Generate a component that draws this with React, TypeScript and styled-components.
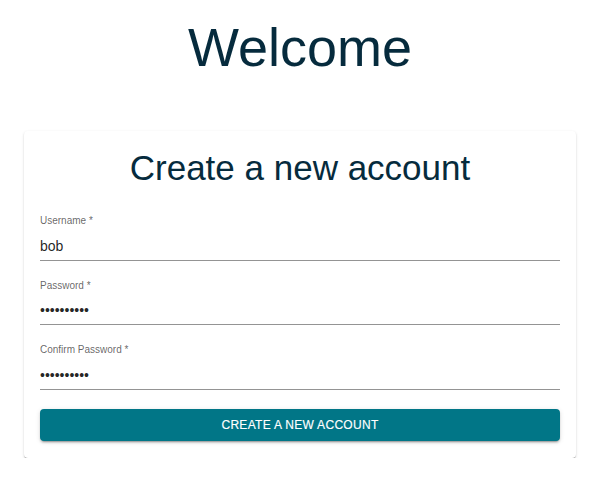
import React from 'react';
import styled, { createGlobalStyle } from 'styled-components';

const GlobalStyle = createGlobalStyle`
	body {
		margin: 0;
		background: #ffffff;
		font-family: "Liberation Sans", Arial, sans-serif;
	}
`

const Page = styled.main`
	display: flex;
	flex-direction: column;
	align-items: stretch;
	padding: 20px 20px 0 24px;
`
const Heading = styled.h1`
	margin: 0 0 57px;
	text-align: center;
	font-size: 54px;
	font-weight: 400;
	line-height: 54px;
	color: #062b3d;
`
const Card = styled.form`
	display: flex;
	flex-direction: column;
	gap: 19px;
	padding: 16px 16px 17px;
	border-radius: 4px;
	background: #fff;
	box-shadow: 0 2px 1px -1px rgba(0, 0, 0, 0.28), 0 1px 1px 0 rgba(0, 0, 0, 0.16), 0 1px 3px 0 rgba(0, 0, 0, 0.12);
`
const CardTitle = styled.h2`
	margin: 0 0 7px;
	text-align: center;
	font-size: 35px;
	font-weight: 400;
	line-height: 42px;
	color: #062b3d;
`
const Field = styled.label`
	display: flex;
	flex-direction: column;
`
const Label = styled.span`
	font-size: 10px;
	line-height: 12px;
	margin-bottom: 8.5px;
	color: rgba(0, 0, 0, 0.62);
`
const Input = styled.input`
	box-sizing: content-box;
	height: 20px;
	padding: 0 0 4px;
	margin: 0;
	border: 0;
	border-bottom: 1px solid rgba(0, 0, 0, 0.42);
	outline: none;
	background: transparent;
	font-family: inherit;
	font-size: 14px;
	line-height: 20px;
	color: rgba(0, 0, 0, 0.87);
`
const SubmitButton = styled.button`
	height: 32px;
	border: 0;
	border-radius: 4px;
	background: #017687;
	color: #fff;
	font-family: inherit;
	font-size: 12px;
	font-weight: 500;
	letter-spacing: 0.3px;
	text-transform: uppercase;
	-webkit-text-stroke: 0.15px #fff;
	cursor: pointer;
	box-shadow: 0 3px 1px -2px rgba(0, 0, 0, 0.2), 0 2px 2px 0 rgba(0, 0, 0, 0.14), 0 1px 5px 0 rgba(0, 0, 0, 0.12);
`

interface IFieldProps {
	label: string;
	type?: string;
	value: string;
}

function TextField(props: IFieldProps) {
	return (
		<Field>
			<Label>{props.label} *</Label>
			<Input type={props.type || 'text'} defaultValue={props.value} readOnly/>
		</Field>
	);
}

export default function App() {
	return (
		<Page>
			<GlobalStyle/>
			<Heading>Welcome</Heading>
			<Card onSubmit={(e) => e.preventDefault()}>
				<CardTitle>Create a new account</CardTitle>
				<TextField label="Username" value="bob"/>
				<TextField label="Password" type="password" value="secret1234"/>
				<TextField label="Confirm Password" type="password" value="secret1234"/>
				<SubmitButton type="submit">Create a new account</SubmitButton>
			</Card>
		</Page>
	);
}
